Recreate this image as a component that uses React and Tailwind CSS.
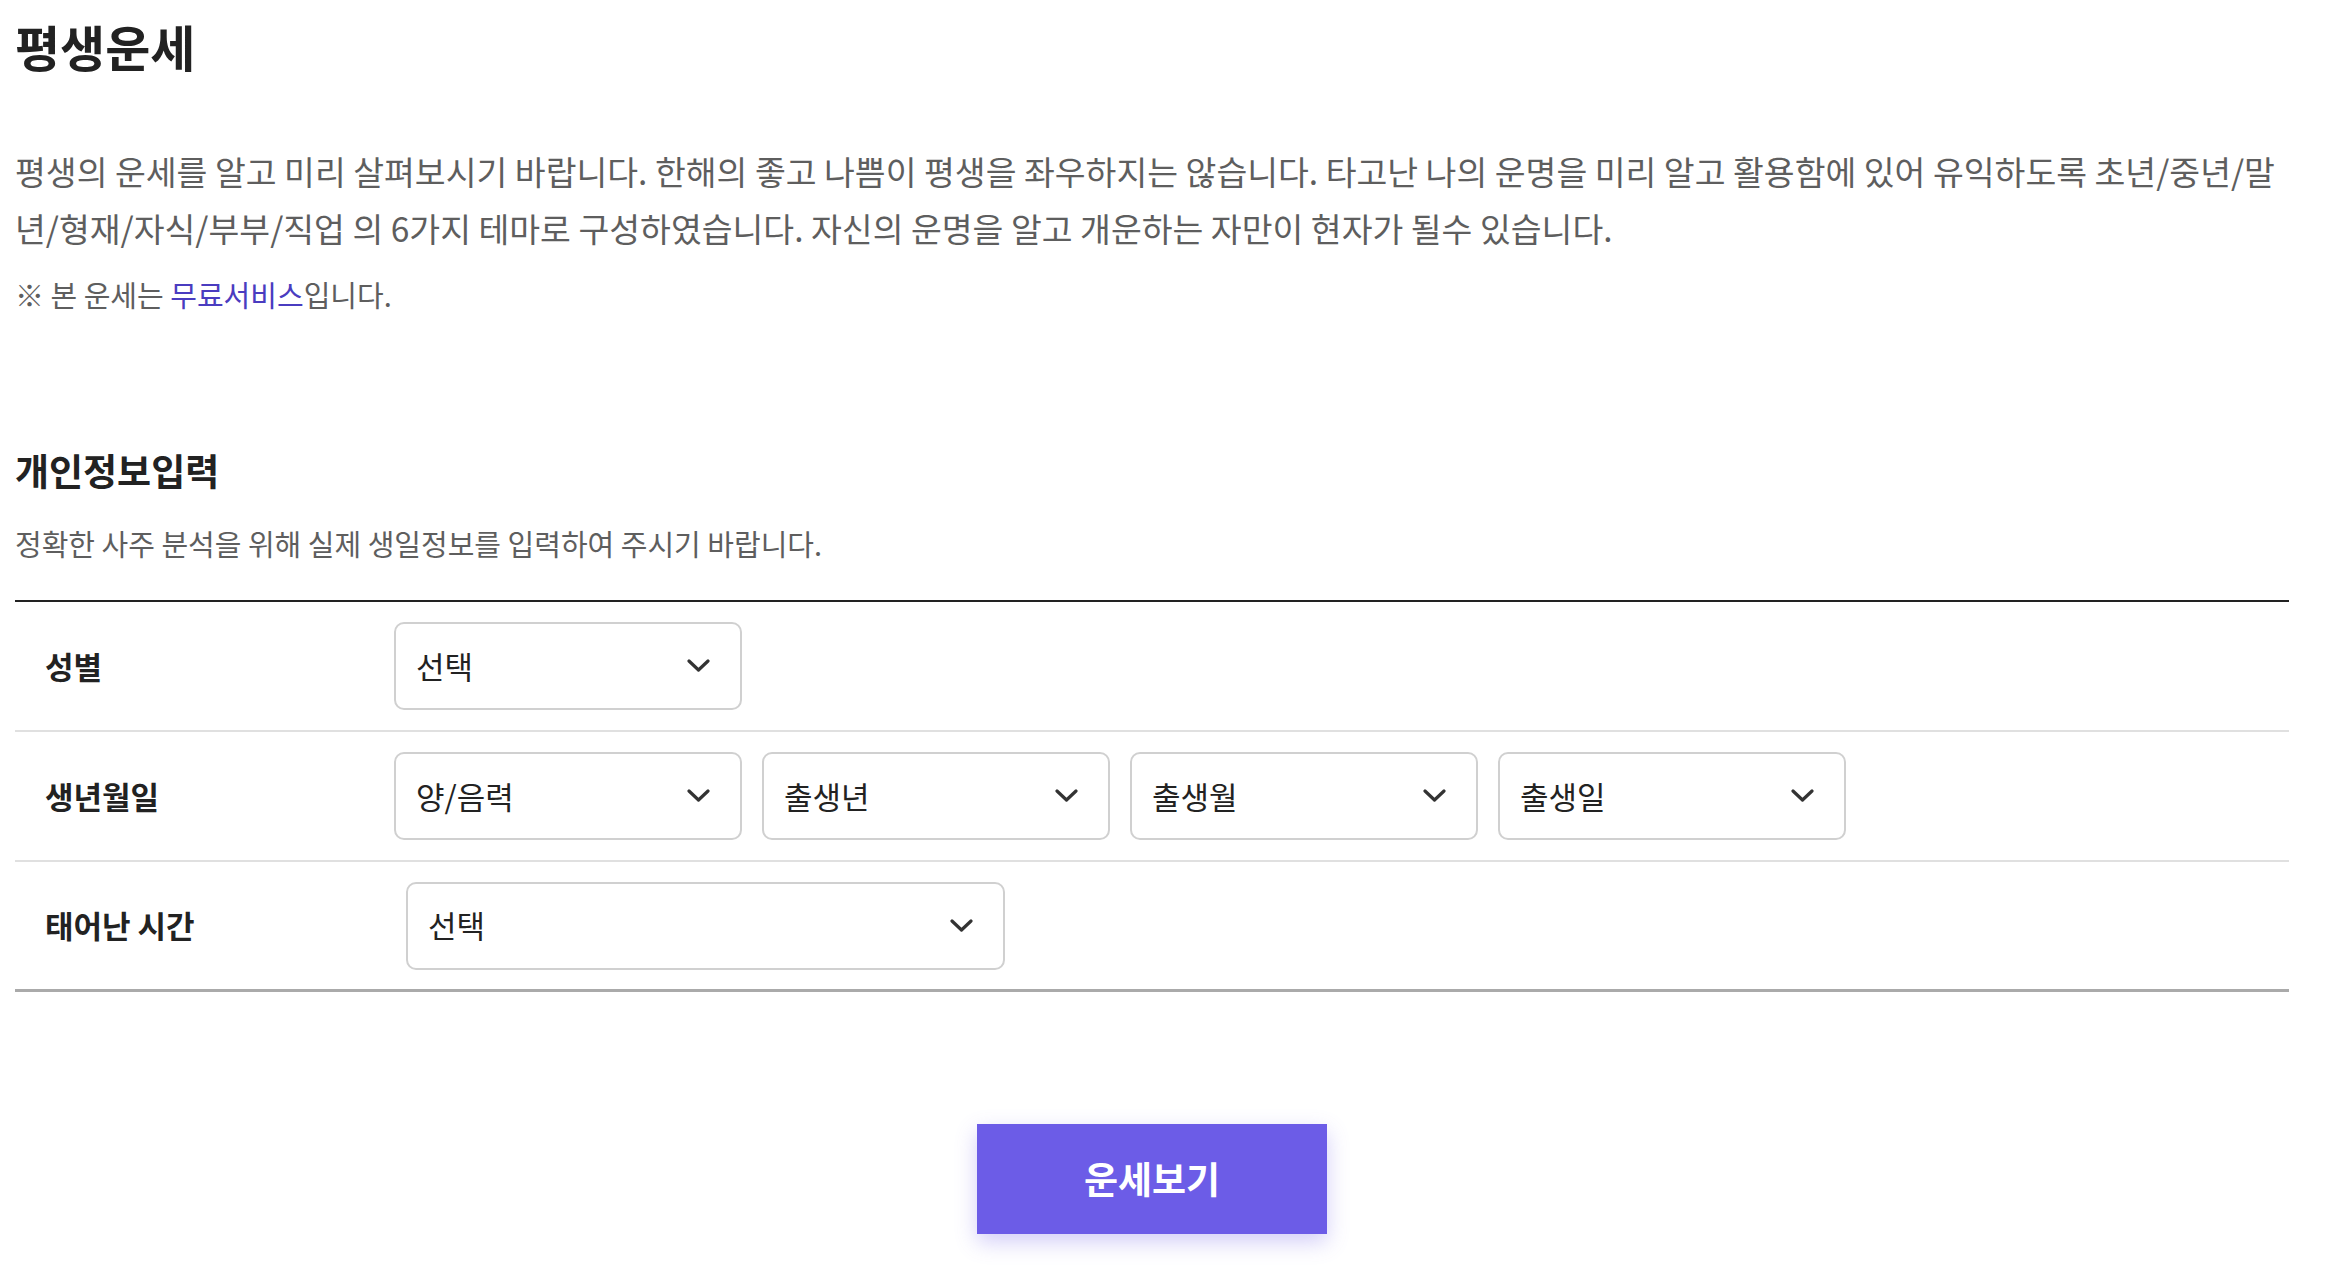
import { useState } from "react";

function Chevron() {
    return (
        <svg width="23" height="14" viewBox="0 0 23 14" fill="none" className="shrink-0">
            <polyline points="2,2 11.5,11 21,2" stroke="#333" strokeWidth="3.2" strokeLinecap="round" strokeLinejoin="round" />
        </svg>
    );
}

function SelectBox({ value, onChange, placeholder, options, className }) {
    return (
        <div className={"relative h-[88px] rounded-[10px] border-2 border-[#d0d0d0] bg-white " + className}>
            <select
                value={value}
                onChange={(e) => onChange(e.target.value)}
                className="h-full w-full appearance-none bg-transparent pl-[20px] pr-[60px] text-[31px] text-[#222] outline-none"
            >
                <option value="">{placeholder}</option>
                {options.map((o) => (
                    <option key={o} value={o}>
                        {o}
                    </option>
                ))}
            </select>
            <div className="pointer-events-none absolute right-[30px] top-1/2 -translate-y-1/2">
                <Chevron />
            </div>
        </div>
    );
}

const years = Array.from({ length: 100 }, (_, i) => `${2024 - i}년`);
const months = Array.from({ length: 12 }, (_, i) => `${i + 1}월`);
const days = Array.from({ length: 31 }, (_, i) => `${i + 1}일`);
const hours = ["모름", "자시", "축시", "인시", "묘시", "진시", "사시", "오시", "미시", "신시", "유시", "술시", "해시"];

export default function App() {
    const [gender, setGender] = useState("");
    const [calendar, setCalendar] = useState("");
    const [year, setYear] = useState("");
    const [month, setMonth] = useState("");
    const [day, setDay] = useState("");
    const [hour, setHour] = useState("");

    return (
        <div className="min-h-screen bg-white font-['Noto_Sans_CJK_KR',sans-serif]">
            <div className="ml-[15px] w-[2274px] pt-[16px]">
                <h1 className="text-[49px] leading-[60px] font-bold text-[#222]">평생운세</h1>

                <p className="mt-[66px] text-[33.5px] leading-[57px] text-[#5e5e5e]">
                    평생의 운세를 알고 미리 살펴보시기 바랍니다. 한해의 좋고 나쁨이 평생을 좌우하지는 않습니다. 타고난 나의 운명을 미리 알고 활용함에 있어 유익하도록 초년/중년/말년/형재/자식/부부/직업 의 6가지 테마로 구성하였습니다. 자신의 운명을 알고 개운하는 자만이 현자가 될수 있습니다.
                </p>
                <p className="mt-[18px] text-[29px] leading-[40px] text-[#5e5e5e]">
                    ※ 본 운세는 <span className="text-[#4a3cc0]">무료서비스</span>입니다.
                </p>

                <h2 className="mt-[132px] text-[37px] leading-[48px] font-bold text-[#222]">개인정보입력</h2>
                <p className="mt-[29px] text-[29px] leading-[40px] text-[#5e5e5e]">
                    정확한 사주 분석을 위해 실제 생일정보를 입력하여 주시기 바랍니다.
                </p>

                <div className="mt-[37px] border-t-2 border-[#222]">
                    <div className="flex h-[130px] items-center border-b-2 border-[#e0e0e0]">
                        <div className="w-[379px] pl-[30px] text-[31px] font-bold text-[#222]">성별</div>
                        <SelectBox
                            value={gender}
                            onChange={setGender}
                            placeholder="선택"
                            options={["남자", "여자"]}
                            className="w-[348px]"
                        />
                    </div>
                    <div className="flex h-[130px] items-center border-b-2 border-[#e0e0e0]">
                        <div className="w-[379px] pl-[30px] text-[31px] font-bold text-[#222]">생년월일</div>
                        <div className="flex gap-[20px]">
                            <SelectBox value={calendar} onChange={setCalendar} placeholder="양/음력" options={["양력", "음력"]} className="w-[348px]" />
                            <SelectBox value={year} onChange={setYear} placeholder="출생년" options={years} className="w-[348px]" />
                            <SelectBox value={month} onChange={setMonth} placeholder="출생월" options={months} className="w-[348px]" />
                            <SelectBox value={day} onChange={setDay} placeholder="출생일" options={days} className="w-[348px]" />
                        </div>
                    </div>
                    <div className="flex h-[130px] items-center border-b-[3px] border-[#aaa]">
                        <div className="w-[379px] pl-[30px] text-[31px] font-bold text-[#222]">태어난 시간</div>
                        <SelectBox value={hour} onChange={setHour} placeholder="선택" options={hours} className="ml-[12px] w-[599px]" />
                    </div>
                </div>

                <div className="flex justify-center pt-[132px] pb-[49px]">
                    <button
                        type="button"
                        className="h-[110px] w-[350px] bg-[#6c5ce7] text-[37px] font-bold text-white shadow-[0_8px_20px_rgba(108,92,231,0.3)]"
                    >
                        운세보기
                    </button>
                </div>
            </div>
        </div>
    );
}
